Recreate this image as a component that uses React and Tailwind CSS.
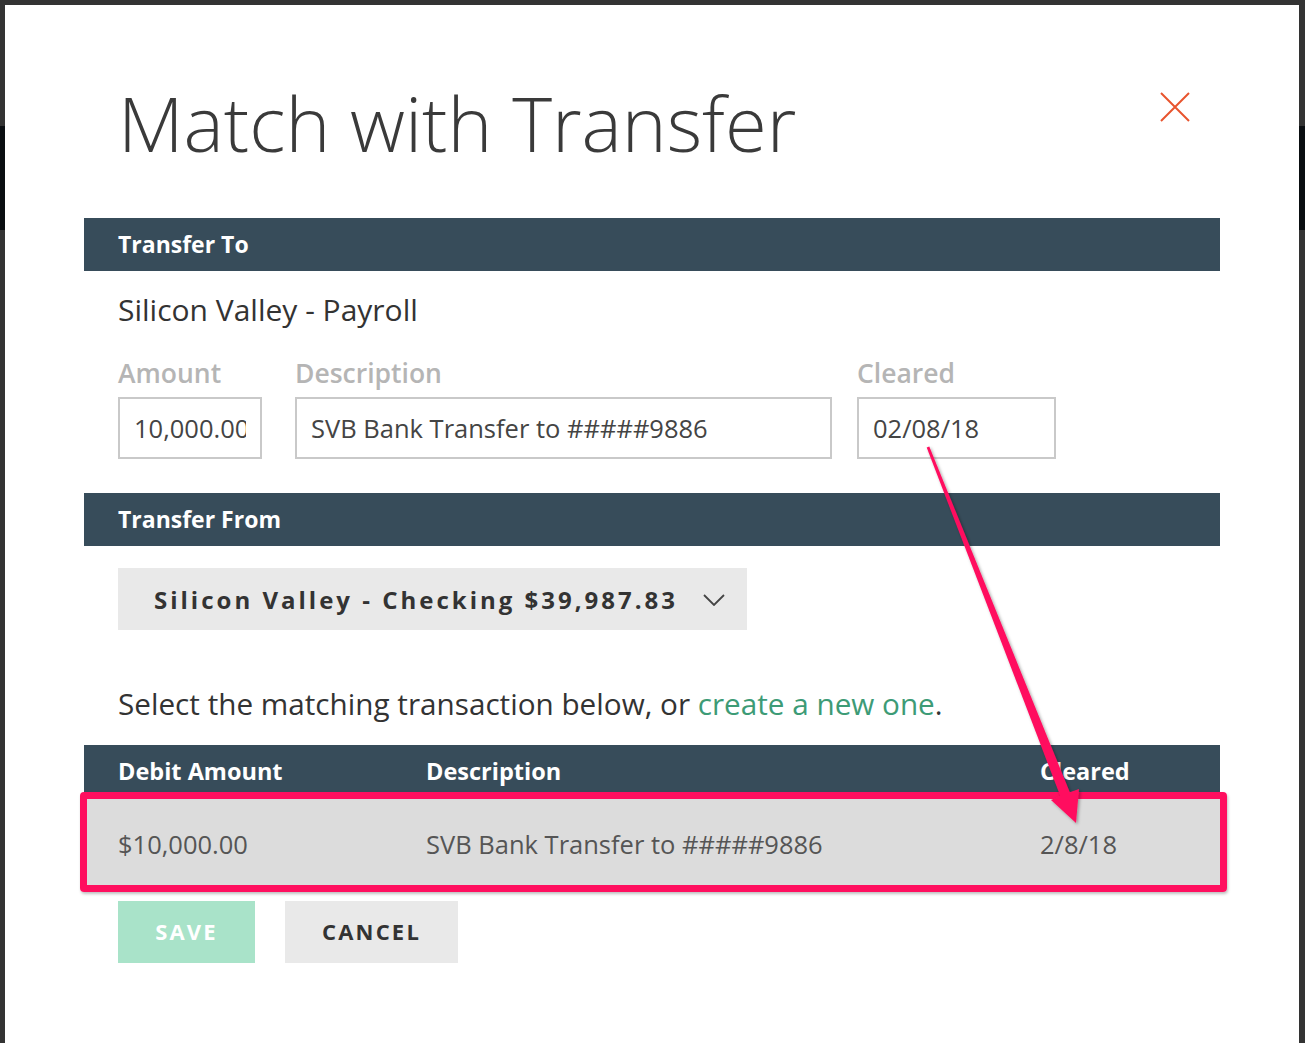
import React from "react";

const font = { fontFamily: "'Open Sans', Lato, sans-serif" };

function Bar({ children, className = "" }) {
  return (
    <div className={`flex h-[53px] items-center bg-[#374c5a] px-[34px] text-[23px] font-bold text-white ${className}`}>
      {children}
    </div>
  );
}

function Field({ label, value, width, className = "" }) {
  return (
    <div className={`flex flex-col ${className}`} style={{ width }}>
      <div className="h-[26px] text-[26.5px] font-semibold leading-none text-[#b5b5b5]">{label}</div>
      <input
        readOnly
        value={value}
        className="mt-[11px] h-[62px] w-full border-2 border-[#c9c9c9] bg-white px-[14px] text-[25.5px] text-[#444] outline-none"
        style={font}
      />
    </div>
  );
}

export default function App() {
  return (
    <div className="relative h-[1043px] w-[1305px] overflow-hidden bg-[#333333] pl-[5px] pt-[5px]" style={font}>
      <div className="absolute inset-x-0 top-[126px] h-[104px] bg-[#0a0e11]" />
      <div className="relative h-[1038px] w-[1294px] bg-white px-[79px] pt-[80px]">
        <div className="flex items-start justify-between">
          <h1 className="ml-[34px] text-[76px] font-light leading-none text-[#3a3a3a]">Match with Transfer</h1>
          <svg className="mr-[30px] mt-[7px]" width="30" height="30" viewBox="0 0 30 30">
            <path d="M1 1 L29 29 M29 1 L1 29" stroke="#e8542e" strokeWidth="2" fill="none" />
          </svg>
        </div>

        <Bar className="mt-[57px]">Transfer To</Bar>

        <div className="ml-[34px] mt-[24px] text-[30px] leading-none text-[#333]">Silicon Valley - Payroll</div>

        <div className="ml-[34px] mt-[35px] flex">
          <Field label="Amount" value="10,000.00" width="144px" className="mr-[33px]" />
          <Field label="Description" value="SVB Bank Transfer to #####9886" width="537px" className="mr-[25px]" />
          <Field label="Cleared" value="02/08/18" width="199px" />
        </div>

        <Bar className="mt-[34px]">Transfer From</Bar>

        <div className="ml-[34px] mt-[22px] flex h-[62px] w-[629px] items-center bg-[#e9e9e9] pl-[36px] pr-[22px] pt-[2px]">
          <span className="text-[24px] font-bold tracking-[3px] text-[#333]">Silicon Valley - Checking $39,987.83</span>
          <svg className="ml-auto" width="22" height="12" viewBox="0 0 22 12">
            <path d="M1 1 L11 11 L21 1" stroke="#444" strokeWidth="1.8" fill="none" />
          </svg>
        </div>

        <div className="ml-[34px] mt-[59px] text-[29.7px] leading-none text-[#333]">
          Select the matching transaction below, or <span className="text-[#3d9b76]">create a new one</span>.
        </div>

        <div className="mt-[26px]">
          <div className="flex h-[50px] items-center bg-[#374c5a] px-[34px] pt-[4px] text-[23.5px] font-bold text-white">
            <div className="w-[308px]">Debit Amount</div>
            <div className="flex-1">Description</div>
            <div className="w-[146px]">Cleared</div>
          </div>
          <div className="flex h-[92px] items-center bg-[#dcdcdc] px-[34px] pt-[6px] text-[25.5px] text-[#555]">
            <div className="w-[308px]">$10,000.00</div>
            <div className="flex-1">SVB Bank Transfer to #####9886</div>
            <div className="w-[146px]">2/8/18</div>
          </div>
        </div>

        <div className="ml-[34px] mt-[14px] flex gap-[30px]">
          <button className="h-[62px] w-[137px] bg-[#a9e3c9] text-[22px] font-bold tracking-[2.2px] text-white">SAVE</button>
          <button className="h-[62px] w-[173px] bg-[#e9e9e9] text-[22px] font-bold tracking-[2.2px] text-[#333]">CANCEL</button>
        </div>
      </div>

      {/* annotation: highlight box */}
      <div className="absolute left-[80px] top-[792px] h-[100px] w-[1147px] rounded-[4px] border-[7px] border-[#ff0f5f] shadow-[1px_2px_3px_rgba(0,0,0,0.25)]" />

      {/* annotation: arrow */}
      <svg className="pointer-events-none absolute left-0 top-0" width="1305" height="1043" viewBox="0 0 1305 1043">
        <defs>
          <filter id="sh" x="-20%" y="-20%" width="140%" height="140%">
            <feDropShadow dx="1.5" dy="1.5" stdDeviation="1.5" floodColor="#000" floodOpacity="0.35" />
          </filter>
        </defs>
        <polygon
          points="929.3,446.6 1069.8,792.2 1079,789 1076,823 1051,800 1060.2,795.8 926.7,447.4"
          fill="#ff0f5f"
          filter="url(#sh)"
        />
      </svg>
    </div>
  );
}
